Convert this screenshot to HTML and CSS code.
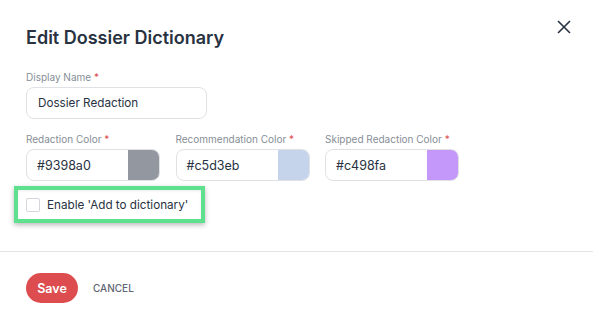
FILE: index.html
```html
<!DOCTYPE html>
<html>
<head>
<meta charset="utf-8">
<link rel="stylesheet" href="styles.css">
</head>
<body>
<div class="dialog">
  <div class="header">
    <h1 class="title">Edit Dossier Dictionary</h1>
    <button class="close" aria-label="Close">
      <svg width="14" height="14" viewBox="0 0 14 14"><path d="M1 1L13 13M13 1L1 13" stroke="#283241" stroke-width="1.6" fill="none"/></svg>
    </button>
  </div>
  <div class="body">
    <div class="field">
      <label class="label">Display Name <span class="req">*</span></label>
      <div class="input name-input">Dossier Redaction</div>
    </div>
    <div class="color-row">
      <div class="field">
        <label class="label">Redaction Color <span class="req">*</span></label>
        <div class="input color-input"><span class="hex">#9398a0</span><span class="swatch sw-gray"></span></div>
      </div>
      <div class="field">
        <label class="label">Recommendation Color <span class="req">*</span></label>
        <div class="input color-input"><span class="hex">#c5d3eb</span><span class="swatch sw-blue"></span></div>
      </div>
      <div class="field">
        <label class="label">Skipped Redaction Color <span class="req">*</span></label>
        <div class="input color-input"><span class="hex">#c498fa</span><span class="swatch sw-purple"></span></div>
      </div>
    </div>
    <div class="highlight">
      <label class="check-row"><span class="checkbox"></span><span class="check-label">Enable 'Add to dictionary'</span></label>
    </div>
  </div>
  <div class="divider"></div>
  <div class="footer">
    <button class="btn-save">Save</button>
    <button class="btn-cancel">CANCEL</button>
  </div>
</div>
</body>
</html>
```

FILE: styles.css
```css
* { box-sizing: border-box; }
html, body { margin: 0; padding: 0; background: #fff; }
body { font-family: Inter, "Noto Sans", sans-serif; color: #283241; width: 593px; height: 322px; overflow: hidden; }
.dialog { width: 593px; height: 322px; position: relative; }
.header { display: flex; justify-content: space-between; align-items: flex-start; padding: 26px 22px 0 26px; }
.title { margin: 0; font-size: 18px; line-height: 24px; font-weight: 600; color: #283241; }
.close { border: 0; background: none; padding: 0; margin-top: -6px; width: 14px; height: 14px; display: flex; }
.body { padding: 20px 26px 0 26px; }
.field { display: flex; flex-direction: column; }
.label { font-size: 10px; line-height: 14px; color: #868e96; margin-bottom: 3px; white-space: nowrap; }
.req { color: #dd4d50; }
.input { border: 1px solid #dfe1e5; border-radius: 8px; height: 32px; font-size: 11.7px; color: #283241; display: flex; align-items: center; background: #fff; }
.name-input { width: 181px; padding-left: 11px; }
.color-row { display: flex; gap: 15.5px; margin-top: 13px; }
.color-input { width: 134px; overflow: hidden; }
.hex { flex: 1; padding-left: 10px; font-size: 12.5px; }
.swatch { width: 32px; align-self: stretch; margin: -1px -1px -1px 0; border-radius: 0 8px 8px 0; }
.sw-gray { background: #9398a0; }
.sw-blue { background: #c5d3eb; }
.sw-purple { background: #c498fa; }
.highlight { display: inline-flex; margin: 5px 0 0 -12px; padding: 0 8px; height: 37px; width: 191px; align-items: center; border: 4px solid #5ee08f; box-shadow: 0 2px 5px rgba(0,0,0,0.28), inset 0 1px 3px rgba(0,0,0,0.08); }
.check-row { display: flex; align-items: center; gap: 7px; white-space: nowrap; }
.checkbox { width: 14px; height: 14px; border: 1px solid #d3d6db; border-radius: 2px; background: #fff; }
.check-label { font-size: 11.7px; color: #283241; }
.divider { height: 1px; background: #e2e4e8; margin-top: 28px; }
.footer { display: flex; align-items: center; gap: 15px; padding: 21px 26px 0 26px; }
.btn-save { border: 0; background: #dd4d50; color: #fff; font-family: inherit; font-size: 12.5px; font-weight: 600; height: 30px; width: 52px; border-radius: 15px; padding: 0; }
.btn-cancel { border: 0; background: none; font-family: inherit; font-size: 10px; font-weight: 500; color: #5f6673; padding: 0; letter-spacing: 0; }
```
